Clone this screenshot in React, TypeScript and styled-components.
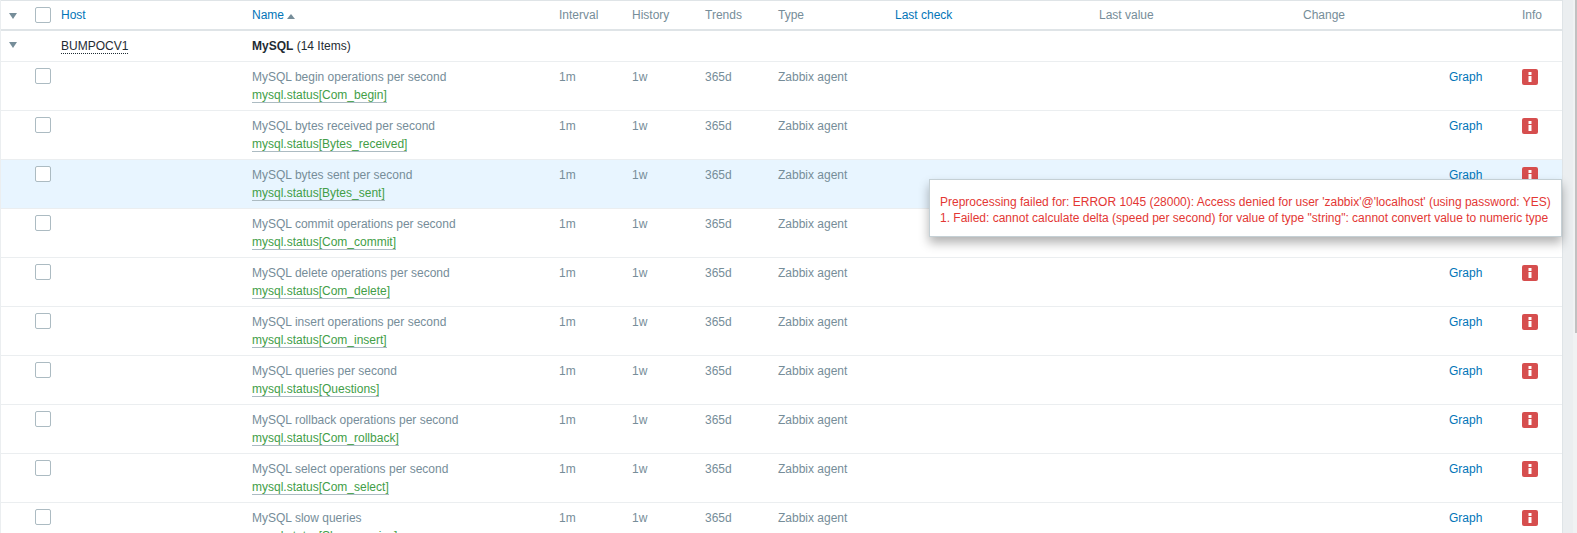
import styled, { createGlobalStyle } from "styled-components";

const COLUMNS = "34px 26px 191px 307px 73px 73px 73px 117px 204px 204px 146px 73px 40px";

const items = [
  { name: "MySQL begin operations per second", key: "mysql.status[Com_begin]" },
  { name: "MySQL bytes received per second", key: "mysql.status[Bytes_received]" },
  { name: "MySQL bytes sent per second", key: "mysql.status[Bytes_sent]", hover: true },
  { name: "MySQL commit operations per second", key: "mysql.status[Com_commit]" },
  { name: "MySQL delete operations per second", key: "mysql.status[Com_delete]" },
  { name: "MySQL insert operations per second", key: "mysql.status[Com_insert]" },
  { name: "MySQL queries per second", key: "mysql.status[Questions]" },
  { name: "MySQL rollback operations per second", key: "mysql.status[Com_rollback]" },
  { name: "MySQL select operations per second", key: "mysql.status[Com_select]" },
  { name: "MySQL slow queries", key: "mysql.status[Slow_queries]" },
];

const App = () => {
  return (
    <PageStyled>
      <GlobalStyle />
      <TableStyled>
        <HeaderRowStyled>
          <ArrowCellStyled $top={12}>
            <CollapseArrow />
          </ArrowCellStyled>
          <CheckCellStyled>
            <CheckboxStyled />
          </CheckCellStyled>
          <HeadLinkStyled>Host</HeadLinkStyled>
          <HeadLinkStyled>
            Name
            <SortArrow />
          </HeadLinkStyled>
          <HeadTextStyled>Interval</HeadTextStyled>
          <HeadTextStyled>History</HeadTextStyled>
          <HeadTextStyled>Trends</HeadTextStyled>
          <HeadTextStyled>Type</HeadTextStyled>
          <HeadLinkStyled>Last check</HeadLinkStyled>
          <HeadTextStyled>Last value</HeadTextStyled>
          <HeadTextStyled>Change</HeadTextStyled>
          <span />
          <HeadTextStyled>Info</HeadTextStyled>
        </HeaderRowStyled>

        <GroupRowStyled>
          <ArrowCellStyled $top={11}>
            <CollapseArrow />
          </ArrowCellStyled>
          <span />
          <HostStyled>
            <HostNameStyled>BUMPOCV1</HostNameStyled>
          </HostStyled>
          <GroupNameStyled>
            <b>MySQL</b> (14 Items)
          </GroupNameStyled>
        </GroupRowStyled>

        {items.map((item) => (
          <ItemRowStyled key={item.key} $hover={!!item.hover}>
            <span />
            <ItemCheckCellStyled>
              <CheckboxStyled />
            </ItemCheckCellStyled>
            <span />
            <NameCellStyled>
              <ItemNameStyled>{item.name}</ItemNameStyled>
              <ItemKeyStyled>{item.key}</ItemKeyStyled>
            </NameCellStyled>
            <ValueStyled>1m</ValueStyled>
            <ValueStyled>1w</ValueStyled>
            <ValueStyled>365d</ValueStyled>
            <ValueStyled>Zabbix agent</ValueStyled>
            <span />
            <span />
            <span />
            <GraphLinkStyled>Graph</GraphLinkStyled>
            <InfoCellStyled>
              <InfoIcon />
            </InfoCellStyled>
          </ItemRowStyled>
        ))}

        <HintBoxStyled>
          <div>Preprocessing failed for: ERROR 1045 (28000): Access denied for user 'zabbix'@'localhost' (using password: YES)</div>
          <div>1. Failed: cannot calculate delta (speed per second) for value of type "string": cannot convert value to numeric type</div>
        </HintBoxStyled>
      </TableStyled>
      <GutterStyled>
        <ScrollTrackStyled>
          <ScrollThumbStyled />
        </ScrollTrackStyled>
      </GutterStyled>
    </PageStyled>
  );
};

export default App;

const CollapseArrow = () => (
  <svg width="8" height="6" viewBox="0 0 8 6" aria-hidden="true">
    <path d="M0 0h8L4 6z" fill="#768d99" />
  </svg>
);

const SortArrow = () => (
  <SortArrowStyled width="8" height="5" viewBox="0 0 8 5" aria-hidden="true">
    <path d="M4 0l4 5H0z" fill="#768d99" />
  </SortArrowStyled>
);

const InfoIcon = () => (
  <svg width="16" height="16" viewBox="0 0 16 16" aria-hidden="true">
    <rect width="16" height="16" rx="2" fill="#d64e4e" />
    <rect x="6.5" y="3" width="3" height="3" fill="#fff" />
    <rect x="6.5" y="7" width="3" height="6" fill="#fff" />
  </svg>
);

const GlobalStyle = createGlobalStyle`
  html, body {
    margin: 0;
    padding: 0;
    height: 100%;
    overflow: hidden;
    background-color: #ebeef0;
  }
`;

const PageStyled = styled.div`
  display: flex;
  height: 533px;
  overflow: hidden;
  font-family: "Liberation Sans", Arial, sans-serif;
  font-size: 12px;
  line-height: 14px;
`;

const TableStyled = styled.div`
  position: relative;
  width: 1561px;
  margin-left: 1px;
  flex-shrink: 0;
  align-self: flex-start;
  background-color: #ffffff;
  border-top: 1px solid #dfe4e7;
`;

const HeaderRowStyled = styled.div`
  display: grid;
  grid-template-columns: ${COLUMNS};
  align-items: center;
  height: 28px;
  border-bottom: 2px solid #dfe4e7;
`;

const GroupRowStyled = styled.div`
  display: grid;
  grid-template-columns: ${COLUMNS};
  align-items: center;
  height: 30px;
  border-bottom: 1px solid #ebeef0;
`;

const ItemRowStyled = styled.div<{ $hover: boolean }>`
  display: grid;
  grid-template-columns: ${COLUMNS};
  align-items: start;
  height: 48px;
  border-bottom: 1px solid #ebeef0;
  background-color: ${({ $hover }) => ($hover ? "#e8f5ff" : "#ffffff")};
`;

const ArrowCellStyled = styled.div<{ $top: number }>`
  display: flex;
  align-self: start;
  padding: ${({ $top }) => $top}px 0 0 8px;
`;

const CheckCellStyled = styled.div`
  display: flex;
`;

const ItemCheckCellStyled = styled.div`
  display: flex;
  padding-top: 6px;
`;

const CheckboxStyled = styled.div`
  box-sizing: border-box;
  width: 16px;
  height: 16px;
  background-color: #ffffff;
  border: 1px solid #acbbc2;
  border-radius: 2px;
`;

const HeadLinkStyled = styled.div`
  color: #0275b8;
  display: flex;
  align-items: center;
`;

const HeadTextStyled = styled.div`
  color: #768d99;
`;

const SortArrowStyled = styled.svg`
  margin-left: 3px;
  margin-top: 2px;
`;

const HostStyled = styled.div`
  color: #1f2c33;
`;

const HostNameStyled = styled.span`
  border-bottom: 1px dotted #1f2c33;
  display: inline-block;
`;

const GroupNameStyled = styled.div`
  color: #1f2c33;
  grid-column: 4 / span 4;
`;

const NameCellStyled = styled.div`
  padding-top: 8px;
`;

const ItemNameStyled = styled.div`
  color: #768d99;
  margin-bottom: 4px;
`;

const ItemKeyStyled = styled.span`
  display: inline-block;
  color: #429e47;
  border-bottom: 1px solid #acbbc2;
`;

const ValueStyled = styled.div`
  color: #768d99;
  padding-top: 8px;
`;

const GraphLinkStyled = styled.div`
  color: #0275b8;
  padding-top: 8px;
`;

const InfoCellStyled = styled.div`
  display: flex;
  padding-top: 7px;
`;

const HintBoxStyled = styled.div`
  position: absolute;
  top: 178px;
  right: 0;
  box-sizing: border-box;
  width: 633px;
  height: 58px;
  padding: 14px 10px 10px;
  line-height: 16px;
  white-space: nowrap;
  color: #e33734;
  background-color: #ffffff;
  border: 1px solid #c5d0d5;
  box-shadow: 0 6px 10px 0 rgba(0, 0, 0, 0.3);
`;

const GutterStyled = styled.div`
  flex: 1;
  display: flex;
  justify-content: flex-end;
  border-left: 1px solid #dfe4e7;
`;

const ScrollTrackStyled = styled.div`
  width: 4px;
  background-color: #f0f2f3;
`;

const ScrollThumbStyled = styled.div`
  width: 2px;
  height: 333px;
  margin-left: 2px;
  background-color: #c1c1c1;
`;
